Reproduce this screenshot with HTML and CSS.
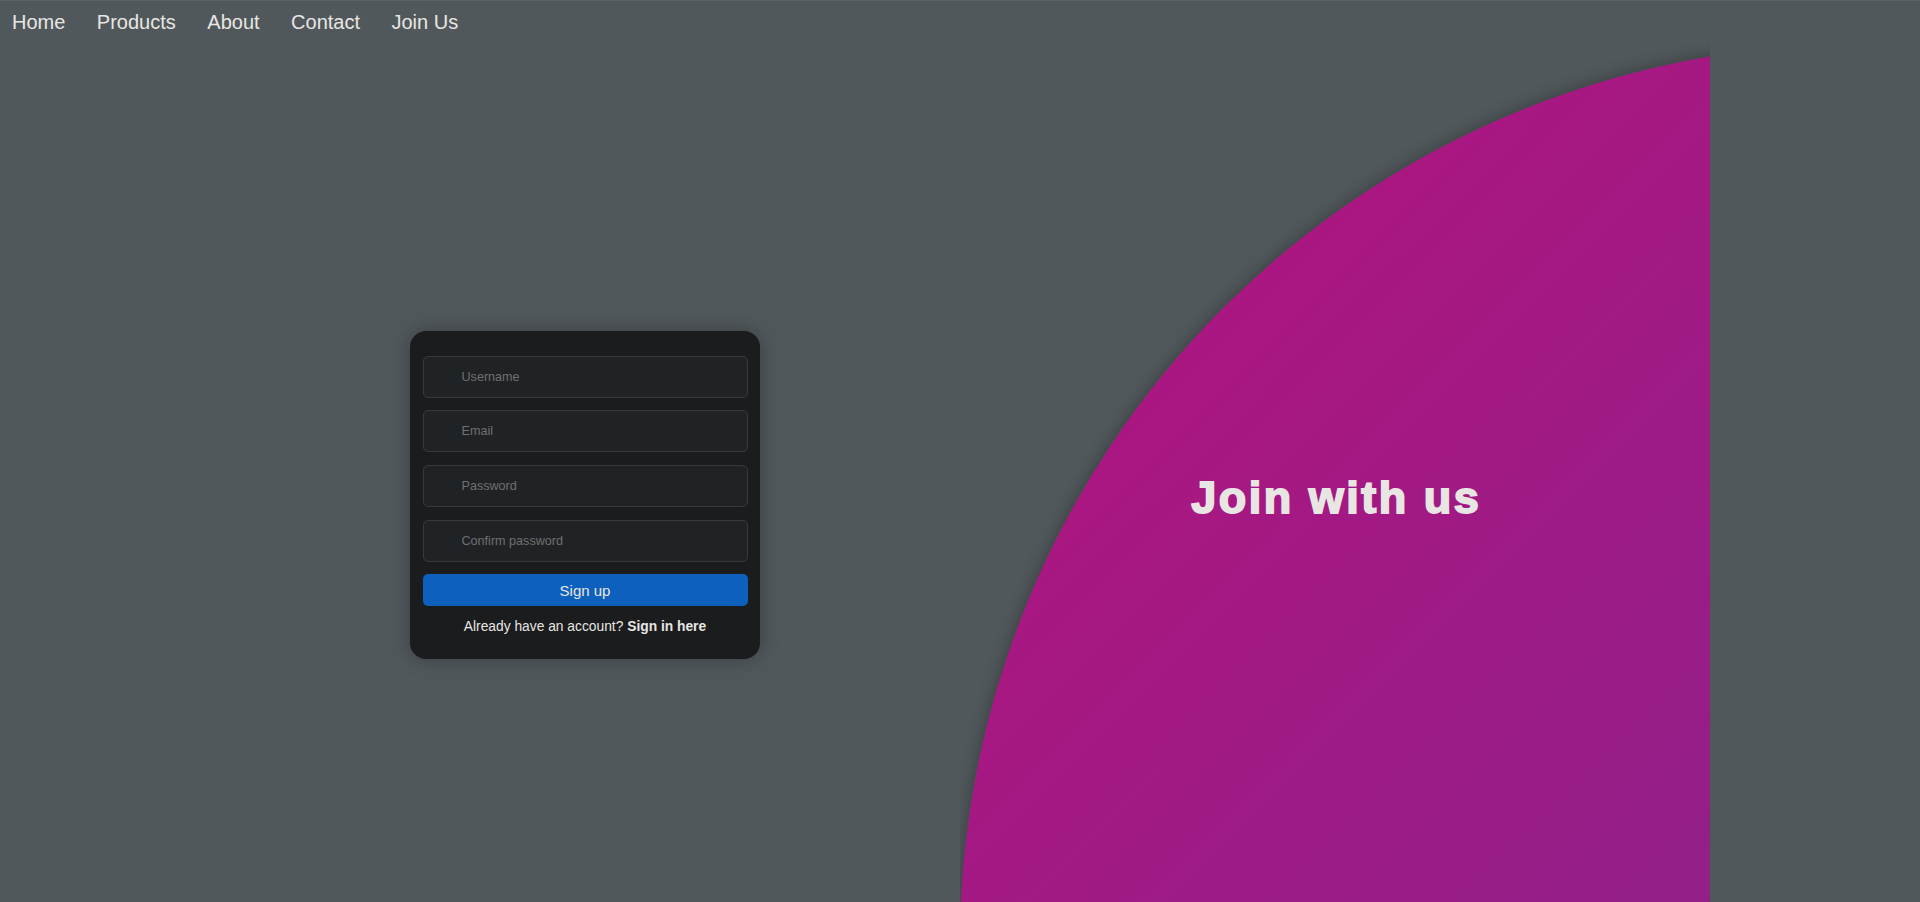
FILE: index.html
```html
<!DOCTYPE html>
<html lang="en">
<head>
<meta charset="utf-8">
<title>Join with us</title>
<link rel="stylesheet" href="styles.css">
</head>
<body>
<nav class="topnav">
  <a href="#">Home</a>
  <a href="#">Products</a>
  <a href="#">About</a>
  <a href="#">Contact</a>
  <a href="#">Join Us</a>
</nav>
<main class="page">
  <section class="form-col">
    <form class="card">
      <input class="field" type="text" placeholder="Username">
      <input class="field" type="email" placeholder="Email">
      <input class="field" type="password" placeholder="Password">
      <input class="field" type="password" placeholder="Confirm password">
      <button class="btn" type="button">Sign up</button>
      <p class="switch">Already have an account? <a href="#">Sign in here</a></p>
    </form>
  </section>
  <section class="hero-col">
    <div class="blob"></div>
    <h1 class="hero-title">Join with us</h1>
  </section>
</main>
</body>
</html>
```

FILE: styles.css
```css
html, body {
  margin: 0;
  height: 100%;
  overflow: hidden;
}

body {
  background: #51585b;
  font-family: "Liberation Sans", Arial, sans-serif;
  color: #e8e6e3;
}

.topnav {
  height: 44px;
  box-sizing: border-box;
  border-top: 1px solid #5d6265;
  display: flex;
  align-items: center;
  padding-left: 12px;
  gap: 31.5px;
}

.topnav a {
  color: #e8e6e3;
  text-decoration: none;
  font-size: 20px;
  line-height: 23px;
}

.page {
  display: flex;
  justify-content: center;
  height: 902px;
}

.form-col {
  width: 750px;
  display: flex;
  align-items: center;
  justify-content: center;
}

.card {
  width: 350px;
  box-sizing: border-box;
  padding: 25px 12.5px;
  background: #1b1c1e;
  border-radius: 16px;
  box-shadow: 0 0 20px rgba(0, 0, 0, 0.3);
  display: flex;
  flex-direction: column;
  gap: 12.67px;
}

.field {
  height: 42px;
  box-sizing: border-box;
  background: #202325;
  border: 1px solid #363a3d;
  border-radius: 5px;
  padding: 0 10px 0 38px;
  font-family: "Liberation Sans", Arial, sans-serif;
  font-size: 12.6px;
  color: #e8e6e3;
  outline: none;
}

.field::placeholder {
  color: #6f7070;
}

.btn {
  height: 32px;
  border: 0;
  border-radius: 5px;
  background: #0e60bd;
  color: #e8e6e3;
  font-family: "Liberation Sans", Arial, sans-serif;
  font-size: 15px;
  padding: 0;
}

.switch {
  margin: 0;
  text-align: center;
  font-size: 13.8px;
  line-height: 15.5px;
  color: #e8e6e3;
}

.switch a {
  font-weight: bold;
  color: #e8e6e3;
  text-decoration: none;
}

.hero-col {
  width: 750px;
  position: relative;
  overflow: hidden;
  display: flex;
  align-items: center;
  justify-content: center;
}

.blob {
  position: absolute;
  left: 0;
  top: 0;
  width: 1800px;
  height: 1800px;
  border-radius: 50%;
  background: linear-gradient(135deg, #b6127d, #673098);
  box-shadow: 0 0 16px 1px rgba(0, 0, 0, 0.3);
}

.hero-title {
  position: relative;
  margin: 0;
  padding: 5px 0 0 2.5px;
  font-size: 45px;
  font-weight: bold;
  letter-spacing: 2.5px;
  color: #e8e6e3;
  -webkit-text-stroke: 1.8px #e8e6e3;
}
```
